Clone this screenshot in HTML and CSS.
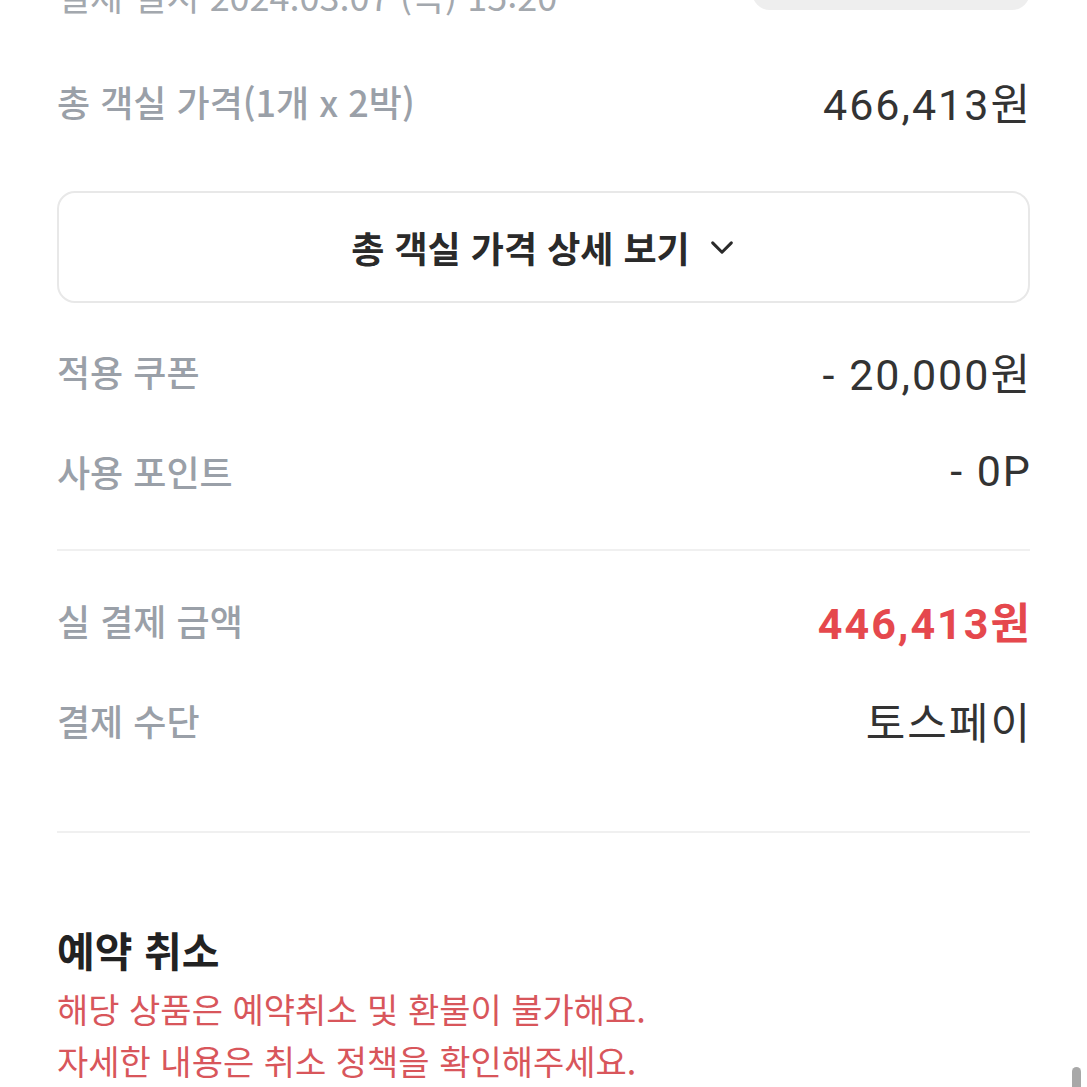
FILE: index.html
```html
<!DOCTYPE html>
<html lang="ko">
<head>
    <meta charset="UTF-8">
    <meta name="viewport" content="width=device-width, initial-scale=1.0">
    <title>결제 정보</title>
    <link rel="stylesheet" href="styles.css">
</head>
<body>
    <div class="page">
        <div class="top-row">
            <span class="top-text">결제 일시 2024.03.07 (목) 15:20</span>
            <span class="top-button"></span>
        </div>

        <div class="row first">
            <span class="label">총 객실 가격(1개 x 2박)</span>
            <span class="value">466,413원</span>
        </div>

        <button type="button" class="detail-button">
            총 객실 가격 상세 보기
            <svg class="chevron" viewBox="0 0 24 24" width="28" height="28">
                <path d="M4 8.5 L12 16.5 L20 8.5" fill="none" stroke="#2a2a2a" stroke-width="2.6" stroke-linecap="round" stroke-linejoin="round"/>
            </svg>
        </button>

        <div class="row">
            <span class="label">적용 쿠폰</span>
            <span class="value">- 20,000원</span>
        </div>
        <div class="row">
            <span class="label">사용 포인트</span>
            <span class="value">- 0P</span>
        </div>

        <hr class="divider">

        <div class="row">
            <span class="label">실 결제 금액</span>
            <span class="value total">446,413원</span>
        </div>
        <div class="row">
            <span class="label">결제 수단</span>
            <span class="value">토스페이</span>
        </div>

        <hr class="divider bottom">

        <div class="cancel">
            <h2>예약 취소</h2>
            <p>해당 상품은 예약취소 및 환불이 불가해요.</p>
            <p>자세한 내용은 취소 정책을 확인해주세요.</p>
        </div>
    </div>
    <div class="scrollbar"></div>
</body>
</html>
```

FILE: styles.css
```css
body {
    margin: 0;
    padding: 0;
    background-color: #ffffff;
    font-family: 'Noto Sans CJK KR', 'Noto Sans', sans-serif;
    color: #333333;
    height: 1087px;
    overflow: hidden;
}
.page {
    padding: 0 57px;
}
.top-row {
    display: flex;
    justify-content: space-between;
    align-items: flex-end;
    height: 50px;
    margin-top: -40px;
}
.top-text {
    font-size: 36px;
    color: #a3a8ae;
    line-height: 1;
    margin-bottom: -3px;
}
.top-button {
    width: 278px;
    height: 50px;
    background-color: #eeeeee;
    border-radius: 0 0 18px 18px;
}
.row {
    display: flex;
    justify-content: space-between;
    align-items: center;
    height: 100px;
}
.row.first {
    margin-top: 41px;
}
.label {
    font-size: 36px;
    font-weight: 500;
    color: #9aa0a8;
}
.value {
    font-family: 'Roboto', 'Noto Sans CJK KR', sans-serif;
    font-size: 43px;
    letter-spacing: 2px;
    margin-right: -2px;
    color: #333333;
}
.value.total {
    color: #e5484d;
    font-weight: bold;
}
.detail-button {
    display: flex;
    justify-content: center;
    align-items: center;
    width: 100%;
    height: 112px;
    margin: 40px 0 18px;
    background-color: #ffffff;
    border: 2px solid #e8e8e8;
    border-radius: 18px;
    font-family: inherit;
    font-size: 36px;
    font-weight: bold;
    color: #2a2a2a;
    cursor: pointer;
}
.chevron {
    margin-left: 18px;
}
.divider {
    border: none;
    border-top: 2px solid #f0f0f0;
    margin: 28px 0 19px;
}
.divider.bottom {
    margin: 61px 0 0;
}
.cancel {
    padding-top: 88px;
}
.cancel h2 {
    margin: 0 0 6px;
    font-size: 41px;
    font-weight: bold;
    color: #222222;
    line-height: 56px;
}
.cancel p {
    margin: 0;
    font-size: 34px;
    color: #d8565b;
    line-height: 52px;
}
.scrollbar {
    position: fixed;
    right: 6px;
    bottom: 0;
    width: 9px;
    height: 20px;
    border-radius: 5px 5px 0 0;
    background-color: #a8a8a8;
}
```
